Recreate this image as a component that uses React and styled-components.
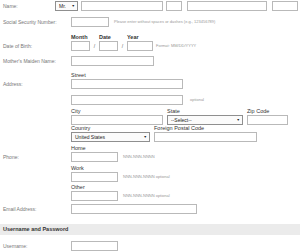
import React from "react";
import styled, { createGlobalStyle } from "styled-components";

const GlobalStyle = createGlobalStyle`
  html, body {
    margin: 0;
    padding: 0;
    background: #fff;
  }
  body {
    font-family: "Liberation Sans", Arial, sans-serif;
  }
`;

const Page = styled.div`
  width: 300px;
  height: 251px;
  overflow: hidden;
  padding-top: 1px;
  box-sizing: border-box;
`;

const Row = styled.div`
  display: flex;
  align-items: flex-start;
  margin-top: ${(p) => p.$mt || 0}px;
`;

const Label = styled.div`
  width: ${(p) => p.$w || 71}px;
  flex-shrink: 0;
  box-sizing: border-box;
  padding-left: 3px;
  padding-top: ${(p) => p.$top || 0}px;
  line-height: 10px;
  font-size: 5px;
  color: #777;
  white-space: nowrap;
`;

const Fields = styled.div`
  display: flex;
  flex-direction: column;
`;

const Line = styled.div`
  display: flex;
  align-items: flex-start;
  gap: ${(p) => p.$gap || 0}px;
  margin-top: ${(p) => p.$mt || 0}px;
`;

const Group = styled.div`
  display: flex;
  flex-direction: column;
  margin-right: ${(p) => p.$mr || 0}px;
`;

const SubLabel = styled.div`
  height: 7px;
  line-height: 7px;
  font-size: 5.5px;
  font-weight: ${(p) => (p.$bold ? 700 : 400)};
  color: #333;
  white-space: nowrap;
`;

const Input = styled.div`
  box-sizing: border-box;
  width: ${(p) => p.$w}px;
  height: 10px;
  border: 1px solid #b9b9b9;
  background: #fff;
  flex-shrink: 0;
  margin-right: ${(p) => p.$mr || 0}px;
`;

const Select = styled.div`
  box-sizing: border-box;
  width: ${(p) => p.$w}px;
  height: 10px;
  border: 1px solid #8f8f8f;
  background: #fbfbfb;
  display: flex;
  align-items: center;
  justify-content: space-between;
  padding: 0 2px 0 3px;
  font-size: 5px;
  color: #222;
  flex-shrink: 0;
  margin-right: ${(p) => p.$mr || 0}px;
  white-space: nowrap;
`;

const Arrow = styled.span`
  font-size: 3.5px;
  color: #222;
`;

const Slash = styled.div`
  width: 9px;
  padding-top: 7px;
  line-height: 10px;
  text-align: center;
  font-size: 5px;
  color: #666;
`;

const Hint = styled.div`
  margin-left: ${(p) => p.$ml || 5}px;
  line-height: 10px;
  font-size: 4px;
  color: #999;
  white-space: nowrap;
  align-self: ${(p) => (p.$low ? "flex-end" : "auto")};
`;

const Section = styled.div`
  margin-top: ${(p) => p.$mt || 0}px;
  height: 11px;
  line-height: 11px;
  padding-left: 3px;
  background: #ebebeb;
  font-size: 5.5px;
  font-weight: 700;
  color: #333;
`;

const App = () => {
  return (
    <>
      <GlobalStyle />
      <Page>
        <Row>
          <Label $w={55}>Name:</Label>
          <Select $w={23} $mr={3}>
            Mr. <Arrow>▼</Arrow>
          </Select>
          <Input $w={82} $mr={3} />
          <Input $w={16} $mr={5} />
          <Input $w={80} $mr={5} />
          <Input $w={26} />
        </Row>

        <Row $mt={6}>
          <Label>Social Security Number:</Label>
          <Input $w={38} />
          <Hint>Please enter without spaces or dashes (e.g., 123456789)</Hint>
        </Row>

        <Row $mt={7}>
          <Label $top={7}>Date of Birth:</Label>
          <Group>
            <SubLabel $bold>Month</SubLabel>
            <Input $w={19} />
          </Group>
          <Slash>/</Slash>
          <Group>
            <SubLabel $bold>Date</SubLabel>
            <Input $w={19} />
          </Group>
          <Slash>/</Slash>
          <Group>
            <SubLabel $bold>Year</SubLabel>
            <Input $w={26} />
          </Group>
          <Hint $ml={3} $low>Format: MM/DD/YYYY</Hint>
        </Row>

        <Row $mt={5}>
          <Label>Mother's Maiden Name:</Label>
          <Input $w={83} />
        </Row>

        <Row $mt={6}>
          <Label $top={7}>Address:</Label>
          <Fields>
            <Group>
              <SubLabel>Street</SubLabel>
              <Input $w={112} />
            </Group>
            <Line $mt={6}>
              <Input $w={112} />
              <Hint $ml={7}>optional</Hint>
            </Line>
            <Line $mt={3}>
              <Group $mr={4}>
                <SubLabel>City</SubLabel>
                <Input $w={92} />
              </Group>
              <Group $mr={4}>
                <SubLabel>State</SubLabel>
                <Select $w={76}>
                  --Select-- <Arrow>▼</Arrow>
                </Select>
              </Group>
              <Group>
                <SubLabel>Zip Code</SubLabel>
                <Input $w={41} />
              </Group>
            </Line>
            <Line>
              <Group $mr={4}>
                <SubLabel>Country</SubLabel>
                <Select $w={79}>
                  United States <Arrow>▼</Arrow>
                </Select>
              </Group>
              <Group>
                <SubLabel>Foreign Postal Code</SubLabel>
                <Input $w={103} />
              </Group>
            </Line>
          </Fields>
        </Row>

        <Row $mt={3}>
          <Label $top={7}>Phone:</Label>
          <Fields>
            <Line>
              <Group>
                <SubLabel>Home</SubLabel>
                <Input $w={47} />
              </Group>
              <Hint $low>NNN-NNN-NNNN</Hint>
            </Line>
            <Line $mt={3}>
              <Group>
                <SubLabel>Work</SubLabel>
                <Input $w={47} />
              </Group>
              <Hint $low>NNN-NNN-NNNN optional</Hint>
            </Line>
            <Line $mt={2}>
              <Group>
                <SubLabel>Other</SubLabel>
                <Input $w={47} />
              </Group>
              <Hint $low>NNN-NNN-NNNN optional</Hint>
            </Line>
          </Fields>
        </Row>

        <Row $mt={3}>
          <Label>Email Address:</Label>
          <Input $w={126} />
        </Row>

        <Section $mt={10}>Username and Password</Section>

        <Row $mt={6}>
          <Label>Username:</Label>
          <Input $w={47} />
        </Row>
      </Page>
    </>
  );
};

export default App;
